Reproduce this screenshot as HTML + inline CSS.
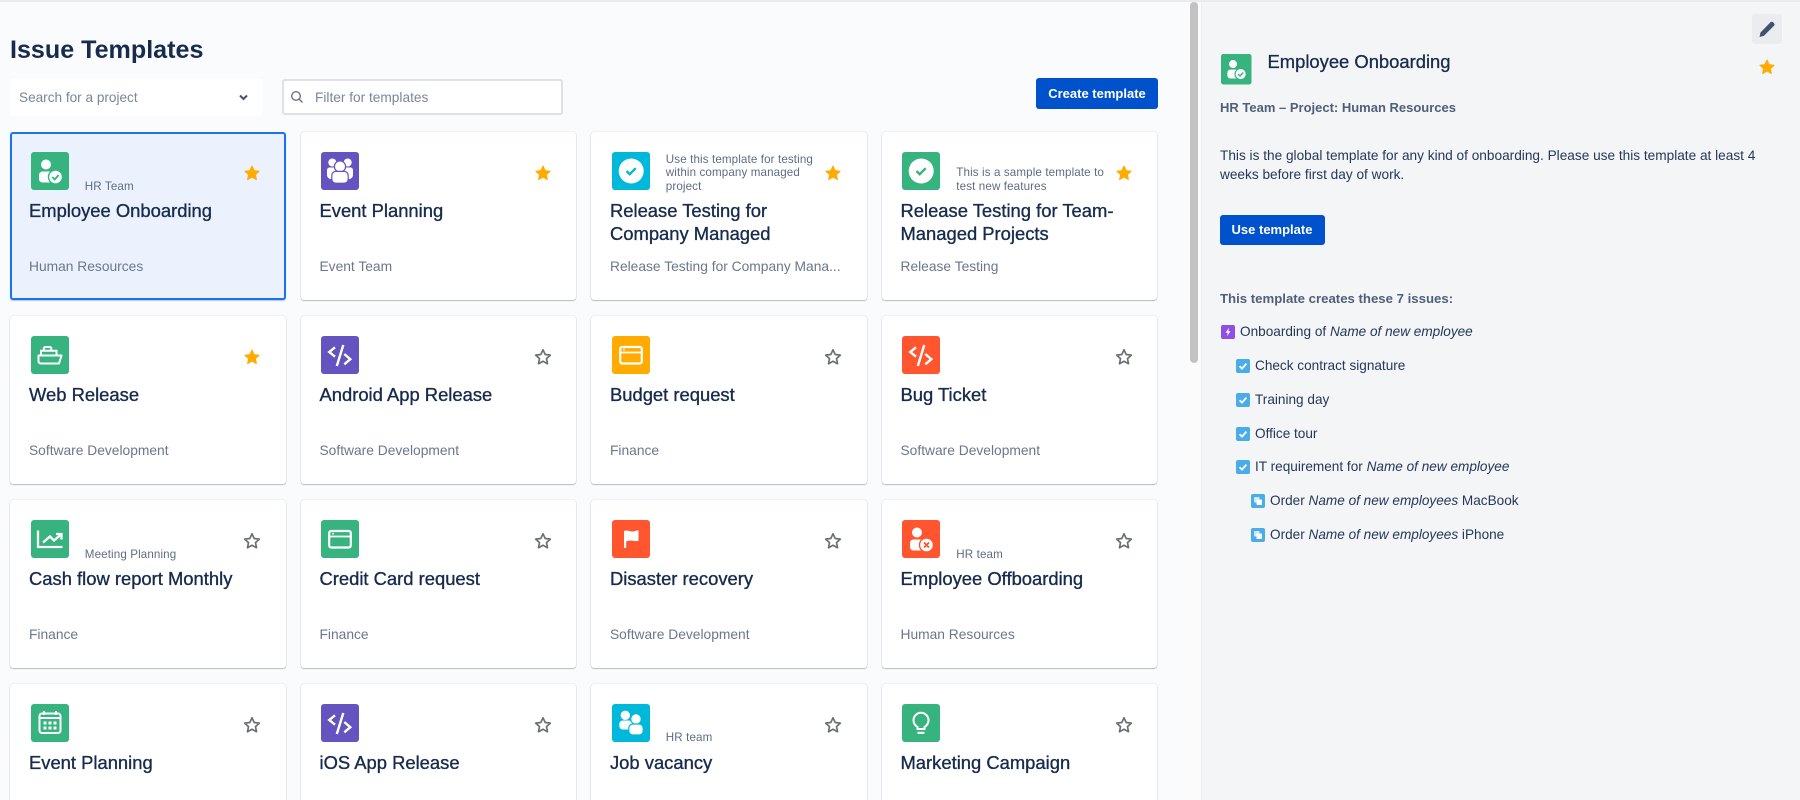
<!DOCTYPE html>
<html><head><meta charset="utf-8"><title>Issue Templates</title>
<style>
html,body{margin:0;padding:0;width:1800px;height:800px;overflow:hidden;background:#fafbfc;font-family:"Liberation Sans",sans-serif;color:#172b4d}
*{box-sizing:border-box}
#wrap{position:absolute;left:0;top:0;width:1800px;height:800px;overflow:hidden;background:#fafbfc;filter:blur(.3px)}
.abs,.c,.c>*{position:absolute}
#top{left:0;top:0;width:1800px;height:2px;background:#e9ebef;z-index:5}
#track{left:1187px;top:0;width:15px;height:800px;background:#fbfbfb}
#thumb{left:1190px;top:2px;width:8px;height:361px;border-radius:4px;background:#c2c2c2}
#panel{left:1201px;top:0;width:599px;height:800px;background:#f4f5f7;border-left:1px solid #eceef1}
h1{position:absolute;margin:0;left:10px;top:35px;font-size:25.1px;line-height:30px;font-weight:700;color:#172b4d;white-space:nowrap}
#sel{left:10px;top:79px;width:253px;height:37px;background:#fff;border-radius:3px}
#sel span{position:absolute;left:9px;top:11px;font-size:13.6px;line-height:16px;color:#7a869a}
#flt{left:282px;top:79px;width:281px;height:36px;background:#fff;border:2px solid #dfe1e6;border-radius:3px}
#flt span{position:absolute;left:31px;top:9px;font-size:13.7px;line-height:16px;color:#7a869a}
.btn{background:#0052cc;color:#fff;font-weight:700;font-size:13px;border-radius:3px;text-align:center;white-space:nowrap}
#crt{left:1036px;top:78px;width:122px;height:31px;line-height:31px}
.c{width:275.5px;height:168px;background:#fff;border-radius:3px;box-shadow:0 1px 1px rgba(9,30,66,.25),0 0 1px rgba(9,30,66,.31)}
.c.s{background:#ebf2fd;box-shadow:inset 0 0 0 2px #1a73f0,0 1px 1px rgba(9,30,66,.25)}
.c.l{height:116.5px;border-radius:3px 3px 0 0}
.ic{left:20.5px;top:20px;width:38px;height:38px}
.st{left:233px;top:32px;width:18px;height:18px}
.d{left:74.5px;bottom:107.2px;width:160px;font-size:11.6px;letter-spacing:.12px;line-height:13.3px;color:#5e6c84;white-space:nowrap}
.l .d{bottom:55.7px}
.t{left:18.7px;top:68px;width:240px;font-size:18.4px;line-height:22.7px;color:#172b4d;-webkit-text-stroke:.35px #172b4d}
.m{left:18.7px;top:127px;font-size:13.8px;line-height:16px;color:#6b778c;white-space:nowrap}
.r{position:absolute;white-space:nowrap;font-size:13.6px;line-height:18px;color:#253858}
.r svg{position:absolute;top:2px;width:14px;height:14px}
</style></head><body>
<svg width="0" height="0" style="position:absolute">
<defs>
<symbol id="emp" viewBox="0 0 38 38"><rect width="38" height="38" rx="3" fill="currentColor"/><circle cx="15" cy="12.5" r="5" fill="#fff"/><rect x="8" y="19.5" width="14.5" height="11" rx="3.5" fill="#fff"/><circle cx="24.5" cy="25" r="7" fill="#fff" stroke="currentColor" stroke-width="1.4"/><path d="M21.3 25l2.4 2.4 4-4.4" fill="none" stroke="currentColor" stroke-width="1.8"/></symbol>
<symbol id="off" viewBox="0 0 38 38"><rect width="38" height="38" rx="3" fill="currentColor"/><circle cx="15" cy="12.5" r="5" fill="#fff"/><rect x="8" y="19.5" width="14.5" height="11" rx="3.5" fill="#fff"/><circle cx="24.5" cy="25" r="7" fill="#fff" stroke="currentColor" stroke-width="1.4"/><path d="M22 22.5l5 5M27 22.5l-5 5" fill="none" stroke="currentColor" stroke-width="1.8"/></symbol>
<symbol id="grp" viewBox="0 0 38 38"><rect width="38" height="38" rx="3" fill="currentColor"/><circle cx="11.3" cy="10.5" r="4" fill="#fff"/><circle cx="26.7" cy="10.5" r="4" fill="#fff"/><path d="M6 18a2.5 2.5 0 0 1 2.5-2.5h21A2.5 2.5 0 0 1 32 18v5a4 4 0 0 1-4 4H10a4 4 0 0 1-4-4z" fill="#fff"/><circle cx="19" cy="14.5" r="5.6" fill="#fff" stroke="currentColor" stroke-width="1.2"/><rect x="10.8" y="19.4" width="16.4" height="11.8" rx="4" fill="#fff" stroke="currentColor" stroke-width="1.2"/></symbol>
<symbol id="chk" viewBox="0 0 38 38"><rect width="38" height="38" rx="3" fill="currentColor"/><circle cx="19.2" cy="19" r="12.5" fill="#fff"/><path d="M14.5 19l3.2 3.2 6-6" fill="none" stroke="currentColor" stroke-width="2.3"/></symbol>
<symbol id="ship" viewBox="0 0 38 38"><rect width="38" height="38" rx="3" fill="currentColor"/><g fill="none" stroke="#fff" stroke-width="2"><path d="M7.500 19.500h23l-2.500 8H10a2.500 2.500 0 0 1-2.500-2.500z" stroke-linejoin="round"/><path d="M10 19v-4.300h15.500V19M12.800 14.500v-2a1.500 1.500 0 0 1 1.500-1.500h4.500a1.500 1.500 0 0 1 1.500 1.500v2"/></g></symbol>
<symbol id="code" viewBox="0 0 38 38"><rect width="38" height="38" rx="3" fill="currentColor"/><path d="M14 11.300L8.300 16l5.700 4.700M22.300 9l-6.500 21M23.300 18l6 5.200-6 5.100" fill="none" stroke="#fff" stroke-width="2.400"/></symbol>
<symbol id="card" viewBox="0 0 38 38"><rect width="38" height="38" rx="3" fill="currentColor"/><rect x="8.200" y="11" width="21.600" height="16.500" rx="2" fill="none" stroke="#fff" stroke-width="2.200"/><path d="M8 16.500h22" stroke="#fff" stroke-width="1.800"/><circle cx="12" cy="13.700" r=".9" fill="#fff"/></symbol>
<symbol id="flag" viewBox="0 0 38 38"><rect width="38" height="38" rx="3" fill="currentColor"/><path d="M12 11c3-1.500 6 1 9 .5l5.500-1.200v10.500c-4 1-7-1-10.500 0-.8.2-1.500.5-1.800.7V27a1.100 1.100 0 0 1-2.200 0z" fill="#fff"/></symbol>
<symbol id="chart" viewBox="0 0 38 38"><rect width="38" height="38" rx="3" fill="currentColor"/><g fill="none" stroke="#fff" stroke-width="2.300"><path d="M7 10.500V27h24.500"/><path d="M12 22.500l7-6 4 4 7-6M25 14h5.500v5.500"/></g></symbol>
<symbol id="cal" viewBox="0 0 38 38"><rect width="38" height="38" rx="3" fill="currentColor"/><g fill="none" stroke="#fff" stroke-width="2"><rect x="8.500" y="9.500" width="21" height="19.500" rx="2.500"/><path d="M13 7v4M25 7v4M9 14h20"/></g><path fill="#fff" d="M12.500 17.500h3v3h-3zM17.500 17.500h3v3h-3zM22.500 17.500h3v3h-3zM12.500 22.500h3v3h-3zM17.500 22.500h3v3h-3zM22.500 22.500h3v3h-3z"/></symbol>
<symbol id="two" viewBox="0 0 38 38"><rect width="38" height="38" rx="3" fill="currentColor"/><circle cx="13.300" cy="11.300" r="4.700" fill="#fff"/><rect x="7.300" y="16.500" width="13" height="9" rx="3.500" fill="#fff"/><circle cx="24" cy="15" r="5.300" fill="#fff" stroke="currentColor" stroke-width="1.200"/><rect x="16.800" y="20" width="14.400" height="11" rx="4" fill="#fff" stroke="currentColor" stroke-width="1.200"/></symbol>
<symbol id="bulb" viewBox="0 0 38 38"><rect width="38" height="38" rx="3" fill="currentColor"/><path d="M15.500 25v-2c-2.500-1.500-4-4-4-6.700a7.500 7.500 0 0 1 15 0c0 2.700-1.500 5.200-4 6.700v2z" fill="none" stroke="#fff" stroke-width="2"/><path d="M15.500 28.800h7" stroke="#fff" stroke-width="2"/></symbol>
<symbol id="sf" viewBox="0 0 18 18"><path fill="#ffab00" stroke="#ffab00" stroke-width="1" stroke-linejoin="round" d="M9 2l2.100 4.600 5 .6-3.700 3.400 1 5L9 13.100l-4.400 2.500 1-5L1.900 7.200l5-.6z"/></symbol>
<symbol id="so" viewBox="0 0 18 18"><path fill="none" stroke="#6b6f76" stroke-width="1.700" stroke-linejoin="round" d="M9 1.800l2.200 4.700 5.100.6-3.800 3.500 1 5.100L9 13.200l-4.500 2.500 1-5.100-3.800-3.500 5.100-.6z"/></symbol>
<symbol id="tk" viewBox="0 0 14 14"><rect width="14" height="14" rx="2" fill="#4bade8"/><path d="M3.600 7.200l2.400 2.400 4.400-5" fill="none" stroke="#fff" stroke-width="1.800"/></symbol>
<symbol id="sb" viewBox="0 0 14 14"><rect width="14" height="14" rx="2" fill="#4bade8"/><rect x="3" y="3" width="5.500" height="5.500" rx=".8" fill="#cfe9fa"/><rect x="5.500" y="5.500" width="5.500" height="5.500" rx=".8" fill="#fff"/></symbol>
<symbol id="ep" viewBox="0 0 14 14"><rect width="14" height="14" rx="2" fill="#904ee2"/><path d="M8 2.800L4.500 7.800h2.300L6 11.200l3.500-5H7.300z" fill="#fff"/></symbol>
</defs></svg>

<div id="wrap">
<div class="abs" id="top"></div>
<div class="abs" id="track"></div>
<div class="abs" id="thumb"></div>
<div class="abs" id="panel"></div>

<h1>Issue Templates</h1>
<div class="abs" id="sel"><span>Search for a project</span><svg style="position:absolute;left:228px;top:14px" width="11" height="9" viewBox="0 0 11 9"><path d="M2 2.500l3.500 3.500L9 2.500" fill="none" stroke="#42526e" stroke-width="2"/></svg></div>
<div class="abs" id="flt"><span>Filter for templates</span><svg style="position:absolute;left:6px;top:9px" width="14" height="14" viewBox="0 0 14 14"><circle cx="6" cy="6" r="4.300" fill="none" stroke="#6b778c" stroke-width="1.400"/><path d="M9.300 9.300l3.200 3.200" stroke="#6b778c" stroke-width="1.500"/></svg></div>
<div class="abs btn" id="crt">Create template</div>

<div class="c s" style="left:10.300px;top:132px"><svg class="ic" style="color:#36b37e"><use href="#emp"/></svg><svg class="st"><use href="#sf"/></svg><div class="d">HR Team</div><div class="t">Employee Onboarding</div><div class="m">Human Resources</div></div>
<div class="c" style="left:300.800px;top:132px"><svg class="ic" style="color:#6554c0"><use href="#grp"/></svg><svg class="st"><use href="#sf"/></svg><div class="t">Event Planning</div><div class="m">Event Team</div></div>
<div class="c" style="left:591.300px;top:132px"><svg class="ic" style="color:#00b8d9"><use href="#chk"/></svg><svg class="st"><use href="#sf"/></svg><div class="d">Use this template for testing<br>within company managed<br>project</div><div class="t">Release Testing for<br>Company Managed</div><div class="m">Release Testing for Company Mana...</div></div>
<div class="c" style="left:881.800px;top:132px"><svg class="ic" style="color:#36b37e"><use href="#chk"/></svg><svg class="st"><use href="#sf"/></svg><div class="d">This is a sample template to<br>test new features</div><div class="t">Release Testing for Team-<br>Managed Projects</div><div class="m">Release Testing</div></div>

<div class="c" style="left:10.300px;top:316px"><svg class="ic" style="color:#36b37e"><use href="#ship"/></svg><svg class="st"><use href="#sf"/></svg><div class="t">Web Release</div><div class="m">Software Development</div></div>
<div class="c" style="left:300.800px;top:316px"><svg class="ic" style="color:#6554c0"><use href="#code"/></svg><svg class="st"><use href="#so"/></svg><div class="t">Android App Release</div><div class="m">Software Development</div></div>
<div class="c" style="left:591.300px;top:316px"><svg class="ic" style="color:#ffab00"><use href="#card"/></svg><svg class="st"><use href="#so"/></svg><div class="t">Budget request</div><div class="m">Finance</div></div>
<div class="c" style="left:881.800px;top:316px"><svg class="ic" style="color:#ff5630"><use href="#code"/></svg><svg class="st"><use href="#so"/></svg><div class="t">Bug Ticket</div><div class="m">Software Development</div></div>

<div class="c" style="left:10.300px;top:500px"><svg class="ic" style="color:#36b37e"><use href="#chart"/></svg><svg class="st"><use href="#so"/></svg><div class="d">Meeting Planning</div><div class="t">Cash flow report Monthly</div><div class="m">Finance</div></div>
<div class="c" style="left:300.800px;top:500px"><svg class="ic" style="color:#36b37e"><use href="#card"/></svg><svg class="st"><use href="#so"/></svg><div class="t">Credit Card request</div><div class="m">Finance</div></div>
<div class="c" style="left:591.300px;top:500px"><svg class="ic" style="color:#ff5630"><use href="#flag"/></svg><svg class="st"><use href="#so"/></svg><div class="t">Disaster recovery</div><div class="m">Software Development</div></div>
<div class="c" style="left:881.800px;top:500px"><svg class="ic" style="color:#ff5630"><use href="#off"/></svg><svg class="st"><use href="#so"/></svg><div class="d">HR team</div><div class="t">Employee Offboarding</div><div class="m">Human Resources</div></div>

<div class="c l" style="left:10.300px;top:683.500px"><svg class="ic" style="color:#36b37e"><use href="#cal"/></svg><svg class="st"><use href="#so"/></svg><div class="t">Event Planning</div></div>
<div class="c l" style="left:300.800px;top:683.500px"><svg class="ic" style="color:#6554c0"><use href="#code"/></svg><svg class="st"><use href="#so"/></svg><div class="t">iOS App Release</div></div>
<div class="c l" style="left:591.300px;top:683.500px"><svg class="ic" style="color:#00b8d9"><use href="#two"/></svg><svg class="st"><use href="#so"/></svg><div class="d">HR team</div><div class="t">Job vacancy</div></div>
<div class="c l" style="left:881.800px;top:683.500px"><svg class="ic" style="color:#36b37e"><use href="#bulb"/></svg><svg class="st"><use href="#so"/></svg><div class="t">Marketing Campaign</div></div>

<div class="abs" style="left:1752px;top:14px;width:30px;height:30px;background:#ebecf0;border-radius:3px"><svg style="position:absolute;left:6px;top:6px" width="18" height="18" viewBox="0 0 18 18"><path d="M1.500 17l1-4.500L12.500 2.300a1.800 1.800 0 0 1 2.500 0l1 1a1.800 1.800 0 0 1 0 2.500L6 15.800z" fill="#42526e"/></svg></div>
<svg class="abs" style="left:1758px;top:58px" width="18" height="18"><use href="#sf"/></svg>
<svg class="abs" style="left:1221px;top:54px;color:#36b37e" width="30.500" height="30.500"><use href="#emp"/></svg>
<div class="abs" style="left:1267.500px;top:51px;font-size:18.400px;line-height:22px;color:#172b4d;-webkit-text-stroke:.3px #172b4d;white-space:nowrap">Employee Onboarding</div>
<div class="abs" style="left:1220px;top:100px;font-size:13px;line-height:16px;font-weight:700;color:#505f79;white-space:nowrap">HR Team – Project: Human Resources</div>
<div class="abs" style="left:1220px;top:145.500px;font-size:13.650px;line-height:19px;color:#253858;white-space:nowrap">This is the global template for any kind of onboarding. Please use this template at least 4<br>weeks before first day of work.</div>
<div class="abs btn" style="left:1219.500px;top:215px;width:105px;height:30px;line-height:30px">Use template</div>
<div class="abs" style="left:1220px;top:291px;font-size:13.200px;line-height:16px;font-weight:700;color:#505f79;white-space:nowrap">This template creates these 7 issues:</div>

<div class="r" style="left:1240px;top:323px"><svg style="left:-19px"><use href="#ep"/></svg>Onboarding of <i>Name of new employee</i></div>
<div class="r" style="left:1255px;top:357px"><svg style="left:-19px"><use href="#tk"/></svg>Check contract signature</div>
<div class="r" style="left:1255px;top:391px"><svg style="left:-19px"><use href="#tk"/></svg>Training day</div>
<div class="r" style="left:1255px;top:425px"><svg style="left:-19px"><use href="#tk"/></svg>Office tour</div>
<div class="r" style="left:1255px;top:458px"><svg style="left:-19px"><use href="#tk"/></svg>IT requirement for <i>Name of new employee</i></div>
<div class="r" style="left:1270px;top:492px"><svg style="left:-19px"><use href="#sb"/></svg>Order <i>Name of new employees</i> MacBook</div>
<div class="r" style="left:1270px;top:526px"><svg style="left:-19px"><use href="#sb"/></svg>Order <i>Name of new employees</i> iPhone</div>
</div>
</body></html>
